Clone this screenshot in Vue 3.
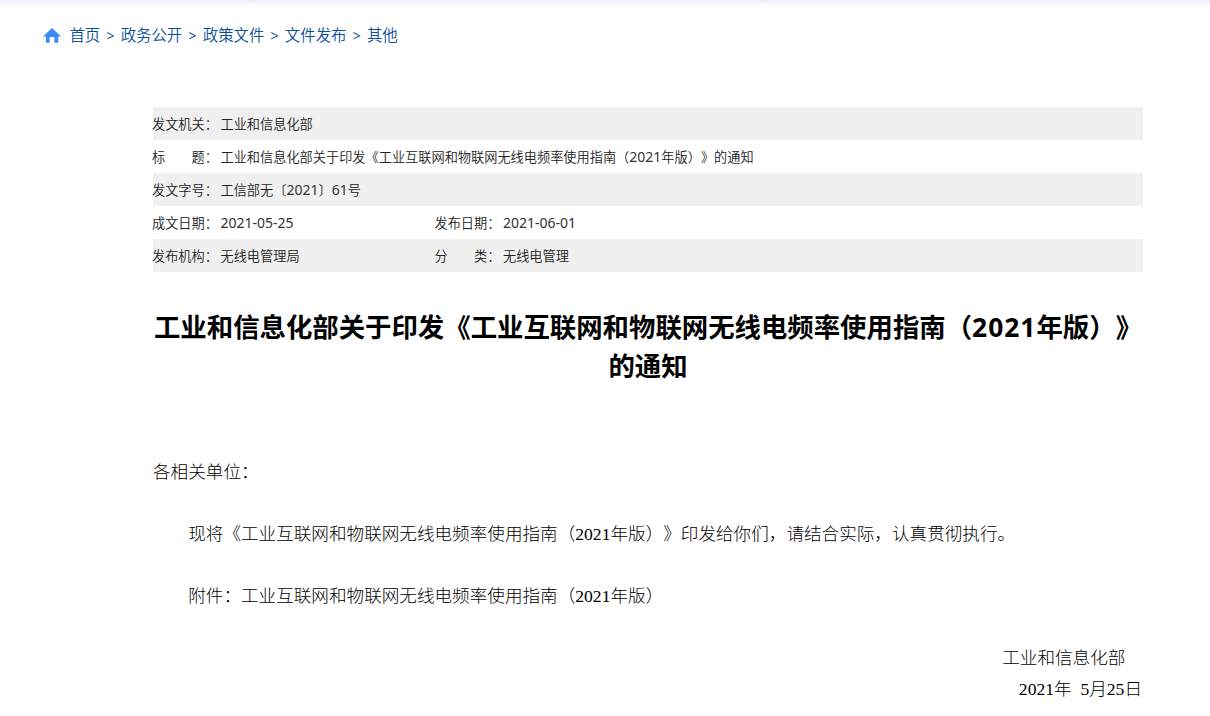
<script setup>
import { ref } from 'vue';

// 面包屑导航
const crumbs = ref(['首页', '政务公开', '政策文件', '文件发布', '其他']);

// 公文信息表，每行一到两个字段
const infoRows = ref([
  [{ label: '发文机关：', value: '工业和信息化部' }],
  [{ label: '标　　题：', value: '工业和信息化部关于印发《工业互联网和物联网无线电频率使用指南（2021年版）》的通知' }],
  [{ label: '发文字号：', value: '工信部无〔2021〕61号' }],
  [
    { label: '成文日期：', value: '2021-05-25' },
    { label: '发布日期：', value: '2021-06-01' },
  ],
  [
    { label: '发布机构：', value: '无线电管理局' },
    { label: '分　　类：', value: '无线电管理' },
  ],
]);

// 把数字和汉字拆开，数字单独设置字号
const splitText = (text) => text.split(/([\d-]+)/).filter(Boolean);
const isNumber = (part) => /^[\d-]+$/.test(part);
</script>

<template>
  <div class="page">
    <nav class="breadcrumb">
      <svg class="home-icon" viewBox="0 0 18 16" width="18" height="16">
        <path d="M9 0 L18 8.4 H15.2 V14.8 H11.4 V9 H6.7 V14.8 H2.9 V8.4 H0 Z" fill="#3b8cf5" />
      </svg>
      <template v-for="(crumb, i) in crumbs" :key="crumb">
        <span v-if="i > 0" class="separator">&gt;</span>
        <a class="crumb">{{ crumb }}</a>
      </template>
    </nav>

    <div class="article">
      <div class="info">
        <div v-for="(row, i) in infoRows" :key="i" class="info-row">
          <div v-for="field in row" :key="field.label" class="field" :class="{ wide: row.length === 1 }">
            <span class="label">{{ field.label }}</span>
            <span class="value"><span v-for="(part, k) in splitText(field.value)" :key="k" :class="{ num: isNumber(part) }">{{ part }}</span></span>
          </div>
        </div>
      </div>

      <h1>工业和信息化部关于印发《工业互联网和物联网无线电频率使用指南（<span class="title-num">2021</span>年版）》<br>的通知</h1>

      <div class="content">
        <p>各相关单位：</p>
        <p class="indent">现将《工业互联网和物联网无线电频率使用指南（2021年版）》印发给你们，请结合实际，认真贯彻执行。</p>
        <p class="indent">附件：工业互联网和物联网无线电频率使用指南（2021年版）</p>
        <div class="signature">
          <div class="department">工业和信息化部</div>
          <div class="sign-date">2021年 5月25日</div>
        </div>
      </div>
    </div>
  </div>
</template>

<style>
body {
  margin: 0;
  background: #fff;
}
</style>

<style scoped>
.page {
  height: 716px;
  overflow: hidden;
  box-sizing: border-box;
  background: linear-gradient(#eef1fa, #ffffff 6px);
  font-family: 'Noto Sans', 'Noto Sans CJK SC', sans-serif;
  text-spacing-trim: space-all; /* 全角标点不压缩 */
}

/* 面包屑 */
.breadcrumb {
  display: flex;
  align-items: center;
  height: 22px;
  padding: 25px 0 0 43px;
  font-size: 15.4px;
  font-weight: 350;
  line-height: 22px;
  color: #0a4f9a;
}

.home-icon {
  margin-right: 8.4px;
}

.crumb {
  white-space: nowrap;
}

.separator {
  width: 20.5px;
  text-align: center;
  font-size: 14px;
  font-weight: 400;
}

/* 正文区域 */
.article {
  width: 990px;
  margin: 60px 0 0 153px;
}

.info-row {
  display: flex;
  height: 33px;
  font-size: 13.2px;
  font-weight: 350;
  line-height: 35px;
  color: #222;
}

.info-row:nth-child(odd) {
  background: #f0f0f0;
}

.field {
  display: flex;
  width: 282.5px;
  margin-left: -1px;
  white-space: nowrap;
}

.field + .field {
  margin-left: 0;
}

.field.wide {
  width: 100%;
}

.label {
  width: 68.5px;
}

.value {
  height: 33px;
}

.num {
  font-size: 14px;
  font-weight: 400;
  line-height: 1;
  color: #333;
}

h1 {
  margin: 36px 0 0;
  font-size: 26.4px;
  font-weight: bold;
  line-height: 39px;
  text-align: center;
  white-space: nowrap;
  color: #000;
}

.title-num {
  letter-spacing: 1px;
}

.content {
  margin-top: 71px;
  font-family: 'Liberation Serif', 'Noto Sans CJK SC', serif;
  font-size: 17.6px;
  font-weight: 300;
  line-height: 31px;
  color: #000;
}

.content p {
  margin: 0 0 31px;
  white-space: nowrap;
}

.content .indent {
  text-indent: 2em;
}

.signature {
  text-align: right;
}

.department {
  padding-right: 1em;
}

.sign-date {
  padding-right: 1px;
  word-spacing: 4.4px;
}
</style>
